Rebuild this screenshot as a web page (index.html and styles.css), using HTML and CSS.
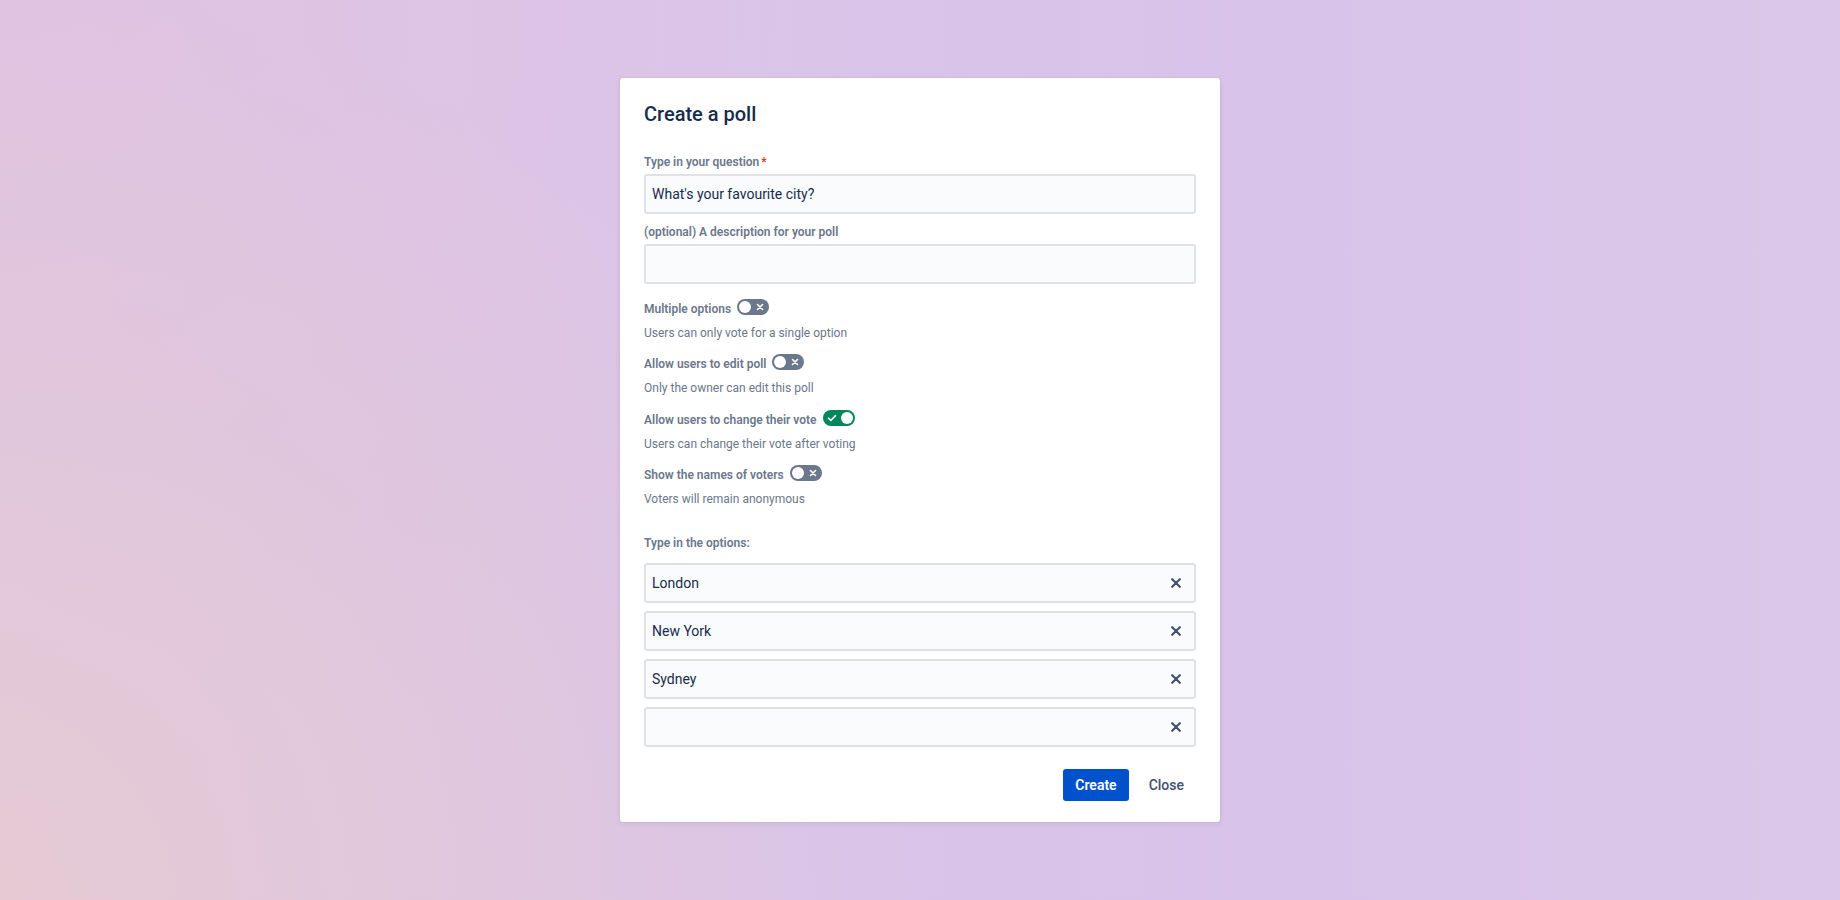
FILE: index.html
```html
<!DOCTYPE html>
<html lang="en">

<head>
    <meta charset="UTF-8">
    <meta name="viewport" content="width=device-width, initial-scale=1.0">
    <title>Create a poll</title>
    <link rel="stylesheet" href="styles.css">
</head>

<body>
    <div class="modal">
        <div class="modal-header">
            <h1 class="modal-title">Create a poll</h1>
        </div>

        <form class="modal-body" onsubmit="return false">
            <div class="field first">
                <label class="field-label" for="question">Type in your question<span class="required">*</span></label>
                <div class="text-field">
                    <input type="text" id="question" value="What's your favourite city?">
                </div>
            </div>

            <div class="field">
                <label class="field-label" for="description">(optional) A description for your poll</label>
                <div class="text-field">
                    <input type="text" id="description">
                </div>
            </div>

            <div class="toggle-field first">
                <div class="toggle-row">
                    <span class="field-label">Multiple options</span>
                    <span class="toggle">
                        <span class="knob"></span>
                        <svg class="toggle-icon cross" width="8" height="8" viewBox="0 0 8 8"><path d="M1.5 1.5l5 5M6.5 1.5l-5 5" stroke="#fff" stroke-width="1.6" stroke-linecap="round"/></svg>
                    </span>
                </div>
                <div class="helper">Users can only vote for a single option</div>
            </div>

            <div class="toggle-field">
                <div class="toggle-row">
                    <span class="field-label">Allow users to edit poll</span>
                    <span class="toggle">
                        <span class="knob"></span>
                        <svg class="toggle-icon cross" width="8" height="8" viewBox="0 0 8 8"><path d="M1.5 1.5l5 5M6.5 1.5l-5 5" stroke="#fff" stroke-width="1.6" stroke-linecap="round"/></svg>
                    </span>
                </div>
                <div class="helper">Only the owner can edit this poll</div>
            </div>

            <div class="toggle-field">
                <div class="toggle-row">
                    <span class="field-label">Allow users to change their vote</span>
                    <span class="toggle on">
                        <svg class="toggle-icon check" width="10" height="8" viewBox="0 0 10 8"><path d="M1.5 4.2l2.3 2.3L8.5 1.6" fill="none" stroke="#fff" stroke-width="1.6" stroke-linecap="round" stroke-linejoin="round"/></svg>
                        <span class="knob"></span>
                    </span>
                </div>
                <div class="helper">Users can change their vote after voting</div>
            </div>

            <div class="toggle-field">
                <div class="toggle-row">
                    <span class="field-label">Show the names of voters</span>
                    <span class="toggle">
                        <span class="knob"></span>
                        <svg class="toggle-icon cross" width="8" height="8" viewBox="0 0 8 8"><path d="M1.5 1.5l5 5M6.5 1.5l-5 5" stroke="#fff" stroke-width="1.6" stroke-linecap="round"/></svg>
                    </span>
                </div>
                <div class="helper">Voters will remain anonymous</div>
            </div>

            <div class="options">
                <div class="field-label options-label">Type in the options:</div>
                <div class="option-list">
                    <div class="text-field">
                        <input type="text" value="London">
                        <button type="button" class="remove"><svg width="10" height="10" viewBox="0 0 10 10"><path d="M1.2 1.2l7.6 7.6M8.8 1.2l-7.6 7.6" stroke="#42526E" stroke-width="2.2" stroke-linecap="round"/></svg></button>
                    </div>
                    <div class="text-field">
                        <input type="text" value="New York">
                        <button type="button" class="remove"><svg width="10" height="10" viewBox="0 0 10 10"><path d="M1.2 1.2l7.6 7.6M8.8 1.2l-7.6 7.6" stroke="#42526E" stroke-width="2.2" stroke-linecap="round"/></svg></button>
                    </div>
                    <div class="text-field">
                        <input type="text" value="Sydney">
                        <button type="button" class="remove"><svg width="10" height="10" viewBox="0 0 10 10"><path d="M1.2 1.2l7.6 7.6M8.8 1.2l-7.6 7.6" stroke="#42526E" stroke-width="2.2" stroke-linecap="round"/></svg></button>
                    </div>
                    <div class="text-field">
                        <input type="text" value="">
                        <button type="button" class="remove"><svg width="10" height="10" viewBox="0 0 10 10"><path d="M1.2 1.2l7.6 7.6M8.8 1.2l-7.6 7.6" stroke="#42526E" stroke-width="2.2" stroke-linecap="round"/></svg></button>
                    </div>
                </div>
            </div>
        </form>

        <div class="modal-footer">
            <button class="btn btn-primary">Create</button>
            <button class="btn btn-subtle">Close</button>
        </div>
    </div>
</body>

</html>
```

FILE: styles.css
```css
body {
    display: flex;
    justify-content: center;
    align-items: center;
    height: 100vh;
    margin: 0;
    background-color: #dcc6e8;
    background-image:
        radial-gradient(circle at 0% 100%, rgba(229, 202, 210, 0.95) 0%, rgba(229, 202, 210, 0) 45%),
        radial-gradient(circle at 0% 0%, rgba(224, 194, 224, 0.9) 0%, rgba(224, 194, 224, 0) 40%),
        linear-gradient(to right, #ddc6e6, #d8c3ea 70%, #dbc8e8);
    font-family: Roboto, "Noto Sans", sans-serif;
    color: #172b4d;
}

.modal {
    width: 600px;
    background: #fff;
    border-radius: 3px;
    box-shadow: 0 0 1px rgba(9, 30, 66, 0.2), 0 2px 6px rgba(9, 30, 66, 0.08);
}

.modal-header {
    padding: 24px 24px 0;
}

.modal-title {
    margin: 0;
    font-size: 20px;
    line-height: 24px;
    font-weight: 500;
    color: #172b4d;
}

.modal-body {
    padding: 0 24px;
}

.field {
    margin-top: 10px;
}

.field.first {
    margin-top: 28px;
}

.field-label {
    display: block;
    font-size: 12px;
    line-height: 16px;
    font-weight: 600;
    color: #6b778c;
}

.field .field-label {
    margin-bottom: 4px;
}

.required {
    color: #de350b;
    padding-left: 2px;
}

.text-field {
    display: flex;
    align-items: center;
    box-sizing: border-box;
    height: 40px;
    border: 2px solid #dfe1e6;
    border-radius: 3px;
    background: #fafbfc;
}

.text-field input {
    flex: 1;
    min-width: 0;
    height: 100%;
    padding: 0 6px;
    border: none;
    outline: none;
    background: transparent;
    font-family: inherit;
    font-size: 14px;
    color: #172b4d;
}

.remove {
    display: flex;
    align-items: center;
    justify-content: center;
    width: 24px;
    height: 24px;
    margin-right: 6px;
    padding: 0;
    border: none;
    background: transparent;
    cursor: pointer;
}

.toggle-field {
    margin-top: 13.5px;
}

.toggle-field.first {
    margin-top: 14.5px;
}

.toggle-row {
    display: flex;
    align-items: center;
    height: 20px;
    gap: 6px;
}

.toggle {
    position: relative;
    display: flex;
    align-items: center;
    justify-content: space-between;
    box-sizing: border-box;
    width: 32px;
    height: 16px;
    padding: 0 2px;
    margin-top: -4px;
    border-radius: 8px;
    background: #6b778c;
}

.toggle.on {
    background: #00875a;
}

.knob {
    width: 12px;
    height: 12px;
    border-radius: 50%;
    background: #fff;
}

.toggle-icon.cross {
    margin-right: 3px;
}

.toggle-icon.check {
    margin-left: 2px;
}

.helper {
    margin-top: 6px;
    font-size: 12px;
    line-height: 16px;
    color: #6b778c;
}

.options {
    margin-top: 27.5px;
}

.options-label {
    margin-bottom: 12px;
}

.option-list {
    display: flex;
    flex-direction: column;
    gap: 8px;
}

.modal-footer {
    display: flex;
    justify-content: flex-end;
    gap: 8px;
    padding: 22px 24px 21px;
}

.btn {
    height: 32px;
    padding: 0 12px;
    border: none;
    border-radius: 3px;
    font-family: inherit;
    font-size: 14px;
    font-weight: 500;
    cursor: pointer;
}

.btn-primary {
    background: #0052cc;
    color: #fff;
    font-weight: 600;
}

.btn-subtle {
    background: transparent;
    color: #42526e;
}
```
